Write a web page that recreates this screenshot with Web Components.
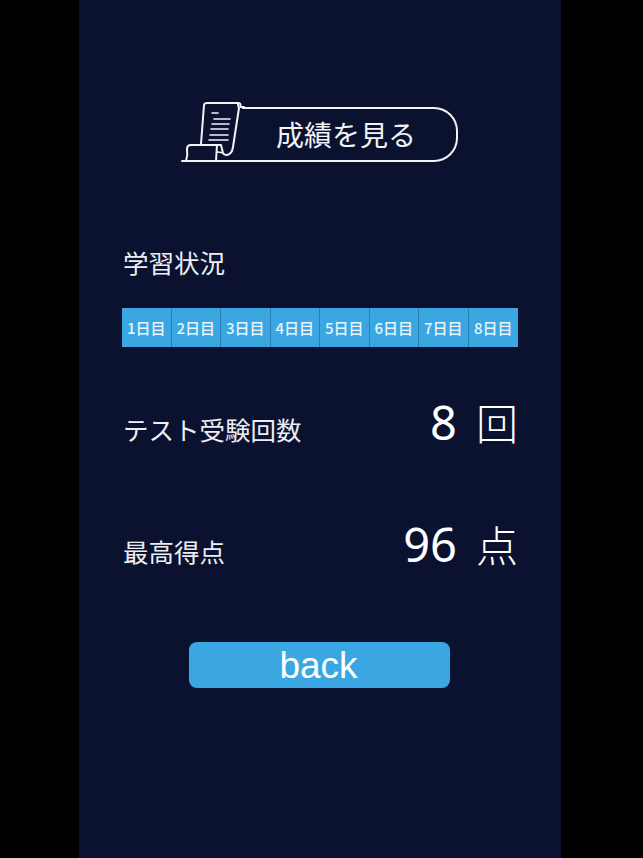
<!DOCTYPE html>
<html lang="ja">
<head>
<meta charset="utf-8">
<style>
  html, body { margin: 0; height: 100%; background: #000; }
</style>
</head>
<body>
<template id="scoreScreen">
  <style>
    :host {
      display: flex;
      flex-direction: column;
      box-sizing: border-box;
      width: 482px;
      height: 858px;
      margin-left: 79px;
      padding: 107px 43px 0 44px;
      background: #0a1230;
      color: #eceef3;
      font-family: "Noto Sans CJK JP", "Noto Sans", sans-serif;
      font-weight: 400;
    }
  </style>
  <slot></slot>
</template>

<template id="titleBanner">
  <style>
    :host {
      display: block;
      position: relative;
      box-sizing: border-box;
      height: 55px;
      margin-left: 59px;
      margin-right: 60px;
      margin-bottom: 82px;
    }
    .frame {
      box-sizing: border-box;
      height: 55px;
      margin-left: 60px;
      border: 2px solid #f2f3f6;
      border-left: none;
      border-radius: 0 24px 24px 0;
      display: flex;
      align-items: center;
      justify-content: center;
      padding: 0 6px 2px 0;
      font-size: 28px;
      line-height: 1;
      color: #f2f3f6;
    }
    svg { position: absolute; left: -2px; top: -7px; }
  </style>
  <div class="frame"><slot></slot></div>
  <svg width="66" height="64" viewBox="0 0 66 64" fill="none" stroke="#f2f3f6" stroke-width="2" stroke-linecap="round" stroke-linejoin="round">
    <path d="M2 61 H65"/>
    <path d="M21 44 L24 5 Q24.500 3 27 3 H58 Q60.500 3 60.500 5 V7 H64"/>
    <path d="M58 3 Q58 6 59 8 L53 47 Q52 54 47 55 Q44 55.500 43 53 L41 45 H21"/>
    <path d="M6 61 Q8 55 7 49 Q7 45 11 45 H37 L36 61"/>
    <path d="M37 52 Q42 52 44 54" stroke-width="1.500"/>
    <path d="M32 13 H38" stroke-width="1.600"/>
    <path d="M34 19 H50" stroke-width="1.600"/>
    <path d="M32 24 H49" stroke-width="1.600"/>
    <path d="M31 29 H48" stroke-width="1.600"/>
    <path d="M30 35 H48" stroke-width="1.600"/>
    <path d="M29 40 H48" stroke-width="1.600"/>
  </svg>
</template>

<template id="dayStrip">
  <style>
    :host {
      display: grid;
      grid-template-columns: repeat(8, 1fr);
      width: 396px;
      height: 39px;
      margin-left: -1px;
      margin-top: 28px;
      margin-bottom: 51px;
      background: #3ba7e2;
    }
  </style>
  <slot></slot>
</template>

<template id="dayCell">
  <style>
    :host {
      display: flex;
      align-items: center;
      justify-content: center;
      box-sizing: border-box;
      border-right: 1px solid #2a7fb2;
      font-size: 15px;
      font-weight: 500;
      color: #e8f5fc;
    }
    :host(:last-child) { border-right: none; }
  </style>
  <slot></slot>
</template>

<template id="statRow">
  <style>
    :host {
      display: flex;
      justify-content: space-between;
      align-items: center;
      height: 50px;
      margin-bottom: 72px;
      font-size: 25.500px;
    }
    .label { padding-top: 10px; }
    .value {
      display: flex;
      align-items: baseline;
      gap: 19px;
      padding-bottom: 3px;
      line-height: 50px;
      font-size: 42px;
      font-weight: 300;
      color: #fff;
    }
    .number {
      font-family: "Noto Sans", sans-serif;
      font-size: 47px;
      font-weight: 400;
    }
  </style>
  <span class="label"><slot name="label"></slot></span>
  <span class="value">
    <span class="number"><slot name="value"></slot></span>
    <slot name="unit"></slot>
  </span>
</template>

<template id="backButton">
  <style>
    :host {
      display: flex;
      align-items: center;
      justify-content: center;
      box-sizing: border-box;
      width: 261px;
      height: 46px;
      margin: 0 0 0 66px;
      padding: 1px 2px 0 0;
      background: #3ba7e2;
      border-radius: 8px;
      font-family: "Liberation Sans", sans-serif;
      font-size: 37px;
      font-weight: 400;
      color: #fff;
      cursor: pointer;
    }
  </style>
  <slot></slot>
</template>

<score-screen>
  <title-banner>成績を見る</title-banner>
  <div style="font-size:25.5px;line-height:36px;">学習状況</div>
  <day-strip>
    <day-cell>1日目</day-cell>
    <day-cell>2日目</day-cell>
    <day-cell>3日目</day-cell>
    <day-cell>4日目</day-cell>
    <day-cell>5日目</day-cell>
    <day-cell>6日目</day-cell>
    <day-cell>7日目</day-cell>
    <day-cell>8日目</day-cell>
  </day-strip>
  <stat-row>
    <span slot="label">テスト受験回数</span>
    <span slot="value">8</span>
    <span slot="unit">回</span>
  </stat-row>
  <stat-row>
    <span slot="label">最高得点</span>
    <span slot="value">96</span>
    <span slot="unit">点</span>
  </stat-row>
  <back-button>back</back-button>
</score-screen>

<script>
  function register(name, templateId) {
    customElements.define(name, class extends HTMLElement {
      connectedCallback() {
        if (this.shadowRoot) return
        this.attachShadow({ mode: 'open' })
        this.shadowRoot.appendChild(document.getElementById(templateId).content.cloneNode(true))
      }
    })
  }
  register('score-screen', 'scoreScreen')
  register('title-banner', 'titleBanner')
  register('day-strip', 'dayStrip')
  register('day-cell', 'dayCell')
  register('stat-row', 'statRow')
  register('back-button', 'backButton')
</script>
</body>
</html>
